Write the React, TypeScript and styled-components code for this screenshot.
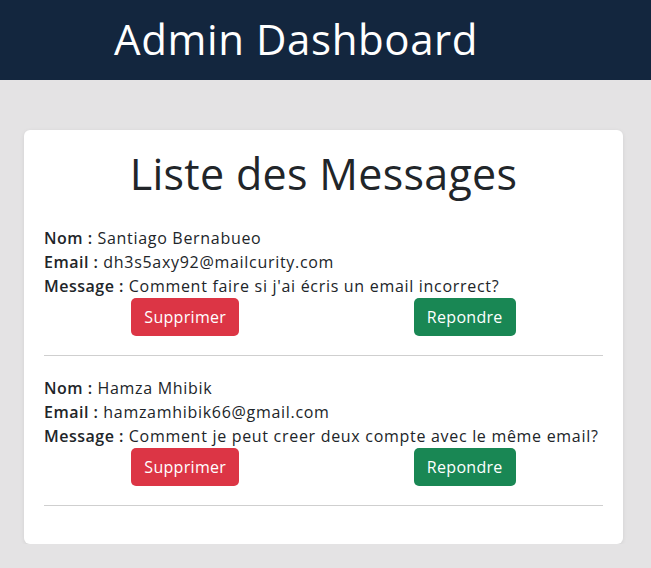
import React from "react";
import styled, { createGlobalStyle } from "styled-components";

interface Message {
  id: number;
  nom: string;
  email: string;
  message: string;
}

const messages: Message[] = [
  {
    id: 1,
    nom: "Santiago Bernabueo",
    email: "dh3s5axy92@mailcurity.com",
    message: "Comment faire si j'ai écris un email incorrect?"
  },
  {
    id: 2,
    nom: "Hamza Mhibik",
    email: "hamzamhibik66@gmail.com",
    message: "Comment je peut creer deux compte avec le même email?"
  }
];

const GlobalStyle = createGlobalStyle`
  * {
    box-sizing: border-box;
  }
  body {
    margin: 0;
    background: #e4e3e4;
    font-family: "Open Sans", "Noto Sans", sans-serif;
    color: #212529;
  }
`;

const Header = styled.header`
  height: 80px;
  background: #13263e;
  display: flex;
  align-items: center;
  padding-left: 114px;
`;

const HeaderTitle = styled.h1`
  margin: 0 0 4px;
  color: #fff;
  font-size: 42px;
  font-weight: 500;
  letter-spacing: 0.6px;
`;

const Main = styled.main`
  padding: 50px 28px 0 24px;
`;

const Card = styled.section`
  background: #fff;
  border-radius: 6px;
  box-shadow: 0 1px 4px rgba(0, 0, 0, 0.08);
  padding: 20px 20px 38px;
`;

const Title = styled.h2`
  margin: 0 0 28px;
  text-align: center;
  font-size: 43px;
  line-height: 48px;
  font-weight: 400;
  letter-spacing: 0.3px;
  color: #212529;
`;

const Item = styled.div`
  border-bottom: 1px solid #cfcfcf;
  padding-bottom: 19px;
  margin-bottom: 20px;

  &:last-child {
    margin-bottom: 0;
  }
`;

const Line = styled.div`
  font-size: 16px;
  line-height: 24px;
  letter-spacing: 0.7px;
  white-space: nowrap;
`;

const Label = styled.b`
  font-weight: 600;
  letter-spacing: 0.5px;
`;

const Actions = styled.div`
  display: flex;
  justify-content: space-around;
`;

const ActionButton = styled.button<{ $variant: "danger" | "success" }>`
  border: none;
  border-radius: 5px;
  height: 38px;
  padding: 0 13px;
  font-family: inherit;
  font-size: 16px;
  letter-spacing: 0.3px;
  color: #fff;
  background: ${(p) => (p.$variant === "danger" ? "#dc3545" : "#198754")};
  cursor: pointer;
`;

const App = () => {
  return (
    <React.Fragment>
      <GlobalStyle />
      <Header>
        <HeaderTitle>Admin Dashboard</HeaderTitle>
      </Header>
      <Main>
        <Card>
          <Title>Liste des Messages</Title>
          {messages.map((msg) => (
            <Item key={msg.id}>
              <Line>
                <Label>Nom :</Label> {msg.nom}
              </Line>
              <Line>
                <Label>Email :</Label> {msg.email}
              </Line>
              <Line>
                <Label>Message :</Label> {msg.message}
              </Line>
              <Actions>
                <ActionButton $variant="danger">Supprimer</ActionButton>
                <ActionButton $variant="success">Repondre</ActionButton>
              </Actions>
            </Item>
          ))}
        </Card>
      </Main>
    </React.Fragment>
  );
};

export default App;
